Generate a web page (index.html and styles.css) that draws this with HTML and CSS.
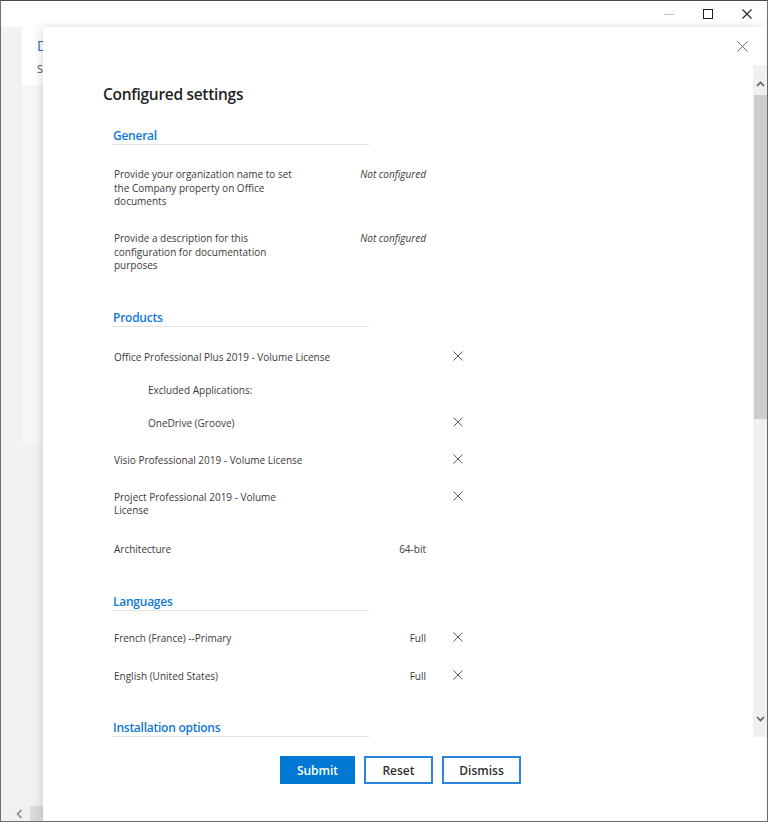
FILE: index.html
```html
<!DOCTYPE html>
<html lang="en">
<head>
<meta charset="utf-8">
<title>Configured settings</title>
<link rel="stylesheet" href="styles.css">
</head>
<body>
<div class="window">
  <div class="titlebar">
    <span class="winctl">
      <svg width="10" height="10" viewBox="0 0 10 10"><path d="M0 5.5H10" stroke="#c4c4c4" stroke-width="1"/></svg>
    </span>
    <span class="winctl">
      <svg width="10" height="10" viewBox="0 0 10 10"><rect x="0.5" y="0.5" width="9" height="9" fill="none" stroke="#1f1f1f" stroke-width="1"/></svg>
    </span>
    <span class="winctl">
      <svg width="10" height="10" viewBox="0 0 10 10"><path d="M0.5 0.5L9.5 9.5M9.5 0.5L0.5 9.5" stroke="#1f1f1f" stroke-width="1.1"/></svg>
    </span>
  </div>
  <div class="main">
    <div class="backdrop">
      <div class="bg-card">
        <div class="bg-card-head">
          <span class="bg-title">D</span>
          <span class="bg-sub">S</span>
        </div>
      </div>
      <div class="hscroll">
        <span class="hs-arrow">
          <svg width="7" height="10" viewBox="0 0 7 10"><path d="M5.5 1L1.5 5L5.5 9" fill="none" stroke="#8a8a8a" stroke-width="1.6"/></svg>
        </span>
        <span class="hs-thumb"></span>
      </div>
    </div>
    <div class="panel">
      <div class="panel-head">
        <span class="panel-close">
          <svg width="11" height="11" viewBox="0 0 11 11"><path d="M0.5 0.5L10.5 10.5M10.5 0.5L0.5 10.5" stroke="#6b6b6b" stroke-width="1"/></svg>
        </span>
      </div>
      <div class="panel-body">
        <div class="content">
          <h1 class="title">Configured settings</h1>

          <div class="sec-head first">General</div>
          <div class="row">
            <div class="label">Provide your organization name to set<br>the Company property on Office<br>documents</div>
            <div class="value italic">Not configured</div>
          </div>
          <div class="row">
            <div class="label">Provide a description for this<br>configuration for documentation<br>purposes</div>
            <div class="value italic">Not configured</div>
          </div>

          <div class="sec-head">Products</div>
          <div class="row">
            <div class="label wide">Office Professional Plus 2019 - Volume License</div>
            <div class="icon"><svg width="10" height="10" viewBox="0 0 10 10"><path d="M0.5 0.5L9.5 9.5M9.5 0.5L0.5 9.5" stroke="#5c5c5c" stroke-width="1"/></svg></div>
          </div>
          <div class="row sub">
            <div class="label wide">Excluded Applications:</div>
          </div>
          <div class="row sub">
            <div class="label wide">OneDrive (Groove)</div>
            <div class="icon"><svg width="10" height="10" viewBox="0 0 10 10"><path d="M0.5 0.5L9.5 9.5M9.5 0.5L0.5 9.5" stroke="#5c5c5c" stroke-width="1"/></svg></div>
          </div>
          <div class="row">
            <div class="label wide">Visio Professional 2019 - Volume License</div>
            <div class="icon"><svg width="10" height="10" viewBox="0 0 10 10"><path d="M0.5 0.5L9.5 9.5M9.5 0.5L0.5 9.5" stroke="#5c5c5c" stroke-width="1"/></svg></div>
          </div>
          <div class="row">
            <div class="label wide">Project Professional 2019 - Volume<br>License</div>
            <div class="icon"><svg width="10" height="10" viewBox="0 0 10 10"><path d="M0.5 0.5L9.5 9.5M9.5 0.5L0.5 9.5" stroke="#5c5c5c" stroke-width="1"/></svg></div>
          </div>
          <div class="row arch">
            <div class="label">Architecture</div>
            <div class="value">64-bit</div>
          </div>

          <div class="sec-head">Languages</div>
          <div class="row lang-first">
            <div class="label">French (France) --Primary</div>
            <div class="value">Full</div>
            <div class="icon"><svg width="10" height="10" viewBox="0 0 10 10"><path d="M0.5 0.5L9.5 9.5M9.5 0.5L0.5 9.5" stroke="#5c5c5c" stroke-width="1"/></svg></div>
          </div>
          <div class="row lang">
            <div class="label">English (United States)</div>
            <div class="value">Full</div>
            <div class="icon"><svg width="10" height="10" viewBox="0 0 10 10"><path d="M0.5 0.5L9.5 9.5M9.5 0.5L0.5 9.5" stroke="#5c5c5c" stroke-width="1"/></svg></div>
          </div>

          <div class="sec-head last">Installation options</div>
        </div>
        <div class="vscroll">
          <div class="sb-up">
            <svg width="9" height="6" viewBox="0 0 9 6"><path d="M1 5L4.5 1.5L8 5" fill="none" stroke="#606060" stroke-width="1.7"/></svg>
          </div>
          <div class="sb-thumb"></div>
          <div class="sb-track"></div>
          <div class="sb-down">
            <svg width="9" height="6" viewBox="0 0 9 6"><path d="M1 1L4.5 4.5L8 1" fill="none" stroke="#606060" stroke-width="1.7"/></svg>
          </div>
        </div>
      </div>
      <div class="panel-foot">
        <button class="btn primary">Submit</button>
        <button class="btn">Reset</button>
        <button class="btn">Dismiss</button>
      </div>
    </div>
  </div>
</div>
</body>
</html>
```

FILE: styles.css
```css
* { box-sizing: border-box; }

html, body {
  margin: 0;
  padding: 0;
  width: 768px;
  height: 822px;
  overflow: hidden;
  background: #ffffff;
  font-family: "Open Sans", "Noto Sans", sans-serif;
  color: #323130;
}

.window {
  width: 768px;
  height: 822px;
  border: 1px solid #6f6f6f;
  border-top-color: #4a4a4a;
  display: flex;
  flex-direction: column;
  background: #ffffff;
}

/* title bar */
.titlebar {
  height: 26px;
  flex: none;
  display: flex;
  justify-content: flex-end;
  align-items: center;
  padding-right: 14px;
  gap: 26px;
  background: #ffffff;
}
.winctl {
  width: 13px;
  height: 10px;
  display: flex;
  align-items: center;
  justify-content: center;
}

/* main area */
.main {
  flex: 1;
  display: flex;
  min-height: 0;
}

.backdrop {
  width: 42px;
  flex: none;
  background: #f2f2f2;
  overflow: hidden;
  display: flex;
  flex-direction: column;
}
.bg-card {
  margin-left: 21px;
  width: 200px;
  height: 417px;
  background: #f6f6f6;
  flex: none;
}
.bg-card-head {
  height: 58px;
  background: #ffffff;
  display: flex;
  flex-direction: column;
  padding: 10px 0 0 15px;
}
.bg-title {
  color: #2d6db5;
  font-size: 14px;
  line-height: 18px;
}
.bg-sub {
  color: #555;
  font-size: 11px;
  line-height: 28px;
}
.hscroll {
  margin-top: auto;
  height: 15px;
  flex: none;
  display: flex;
  align-items: center;
  background: #f0f0f0;
}
.hs-arrow {
  width: 29px;
  display: flex;
  justify-content: center;
  padding-left: 7px;
}
.hs-thumb {
  width: 13px;
  height: 15px;
  background: #dadada;
}

/* side panel */
.panel {
  flex: 1;
  display: flex;
  flex-direction: column;
  background: #ffffff;
  box-shadow: -2px 0 9px rgba(0, 0, 0, 0.13);
  min-width: 0;
}
.panel-head {
  height: 38px;
  flex: none;
  display: flex;
  justify-content: flex-end;
  align-items: center;
  padding-right: 19px;
}
.panel-close {
  width: 11px;
  height: 11px;
  display: flex;
}

.panel-body {
  flex: 1;
  min-height: 0;
  display: flex;
}

.content {
  flex: 1;
  overflow: hidden;
  padding: 18px 0 0 60px;
}

.title {
  margin: 0;
  font-size: 15.5px;
  line-height: 22px;
  font-weight: 600;
  letter-spacing: -0.3px;
  color: #1f1f1f;
}

.sec-head {
  width: 257px;
  margin-left: 9px;
  margin-top: 36.5px;
  padding-left: 1px;
  font-size: 12px;
  line-height: 17px;
  font-weight: 600;
  letter-spacing: -0.25px;
  color: #0f78d4;
  border-bottom: 1px solid #e3e3e3;
}
.sec-head.first {
  margin-top: 21.5px;
}
.sec-head.last {
  margin-top: 35.5px;
}
.sec-head + .row {
  margin-top: 23.5px;
}

.row {
  display: grid;
  grid-template-columns: 190px 122px 63px;
  margin-left: 11px;
  margin-top: 23.5px;
  font-size: 10px;
  line-height: 13.5px;
  color: #3b3a39;
}
.row.sub {
  margin-top: 19.5px;
}
.row.arch {
  margin-top: 25px;
}
.sec-head + .row.lang-first {
  margin-top: 21px;
}
.row.lang {
  margin-top: 24.5px;
}
.row.sub .label {
  padding-left: 34px;
}
.label {
  grid-column: 1;
}
.label.wide {
  grid-column: 1 / 3;
  white-space: nowrap;
}
.value {
  grid-column: 2;
  text-align: right;
}
.value.italic {
  font-style: italic;
}
.icon {
  grid-column: 3;
  justify-self: center;
  align-self: start;
  margin-top: 0.5px;
  width: 10px;
  height: 10px;
  display: flex;
}

/* custom scrollbar */
.vscroll {
  width: 14px;
  flex: none;
  display: flex;
  flex-direction: column;
  background: #f0f0f0;
}
.sb-up {
  height: 30px;
  display: flex;
  justify-content: center;
  align-items: flex-start;
  padding-top: 16px;
}
.sb-thumb {
  height: 324px;
  margin-left: 1px;
  background: #cdcdcd;
}
.sb-track {
  flex: 1;
}
.sb-down {
  height: 36px;
  display: flex;
  justify-content: center;
  align-items: flex-start;
  padding-top: 15px;
}

/* footer */
.panel-foot {
  height: 84px;
  flex: none;
  display: flex;
  gap: 9px;
  padding: 19px 0 0 237px;
}
.btn {
  height: 28px;
  padding: 0;
  font-family: "Open Sans", "Noto Sans", sans-serif;
  font-size: 12px;
  font-weight: 600;
  color: #323130;
  background: #ffffff;
  border: 2px solid #2b86da;
  border-radius: 0;
  width: 69px;
}
.btn.primary {
  width: 75px;
  background: #0078d4;
  border-color: #0078d4;
  color: #ffffff;
}
.btn:last-child {
  width: 79px;
}
```
